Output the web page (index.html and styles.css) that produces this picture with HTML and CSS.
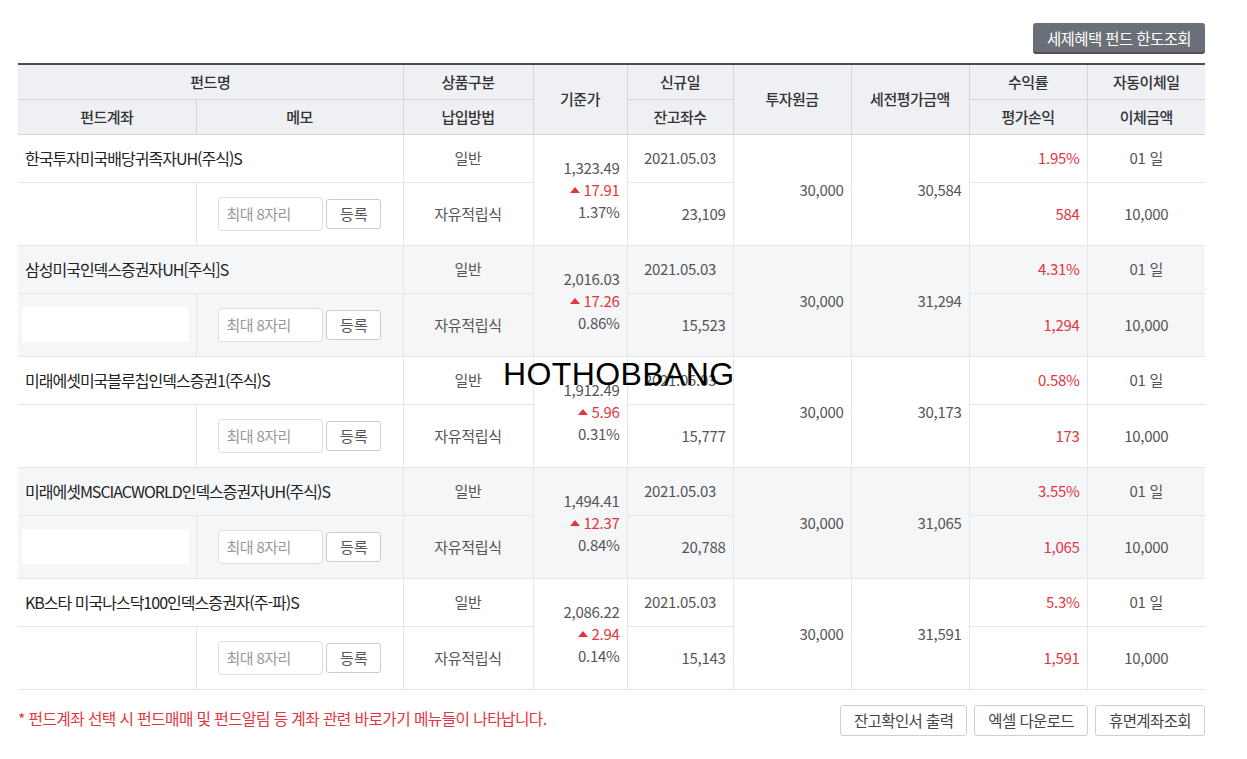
FILE: index.html
```html
<!DOCTYPE html>
<html lang="ko">
<head>
    <meta charset="UTF-8">
    <title>펀드 잔고</title>
    <link rel="stylesheet" href="styles.css">
</head>
<body>
    <div class="wrap">
        <div class="top-bar">
            <button class="btn-dark">세제혜택 펀드 한도조회</button>
        </div>

        <table class="fund-table">
            <colgroup>
                <col style="width:178px"><col style="width:207px"><col style="width:130px">
                <col style="width:94px"><col style="width:106px"><col style="width:118px">
                <col style="width:118px"><col style="width:118px"><col style="width:118px">
            </colgroup>
            <thead>
                <tr class="head-top">
                    <th colspan="2">펀드명</th>
                    <th>상품구분</th>
                    <th rowspan="2">기준가</th>
                    <th>신규일</th>
                    <th rowspan="2">투자원금</th>
                    <th rowspan="2">세전평가금액</th>
                    <th>수익률</th>
                    <th>자동이체일</th>
                </tr>
                <tr class="head-bottom">
                    <th>펀드계좌</th>
                    <th>메모</th>
                    <th>납입방법</th>
                    <th>잔고좌수</th>
                    <th>평가손익</th>
                    <th>이체금액</th>
                </tr>
            </thead>
            <tbody id="rows"></tbody>
        </table>

        <div class="footer">
            <p class="note">* 펀드계좌 선택 시 펀드매매 및 펀드알림 등 계좌 관련 바로가기 메뉴들이 나타납니다.</p>
            <div class="footer-btns">
                <button class="btn-line">잔고확인서 출력</button>
                <button class="btn-line">엑셀 다운로드</button>
                <button class="btn-line">휴면계좌조회</button>
            </div>
        </div>

        <div class="watermark">HOTHOBBANG</div>
    </div>

    <script>
        const funds = [
            { name: "한국투자미국배당귀족자UH(주식)S", price: "1,323.49", diff: "17.91", pct: "1.37%", date: "2021.05.03", units: "23,109", cost: "30,000", value: "30,584", rate: "1.95%", gain: "584", box: false },
            { name: "삼성미국인덱스증권자UH[주식]S", price: "2,016.03", diff: "17.26", pct: "0.86%", date: "2021.05.03", units: "15,523", cost: "30,000", value: "31,294", rate: "4.31%", gain: "1,294", box: true },
            { name: "미래에셋미국블루칩인덱스증권1(주식)S", price: "1,912.49", diff: "5.96", pct: "0.31%", date: "2021.05.03", units: "15,777", cost: "30,000", value: "30,173", rate: "0.58%", gain: "173", box: false },
            { name: "미래에셋MSCIACWORLD인덱스증권자UH(주식)S", price: "1,494.41", diff: "12.37", pct: "0.84%", date: "2021.05.03", units: "20,788", cost: "30,000", value: "31,065", rate: "3.55%", gain: "1,065", box: true },
            { name: "KB스타 미국나스닥100인덱스증권자(주-파)S", price: "2,086.22", diff: "2.94", pct: "0.14%", date: "2021.05.03", units: "15,143", cost: "30,000", value: "31,591", rate: "5.3%", gain: "1,591", box: false }
        ];

        const tbody = document.getElementById("rows");
        funds.forEach((f, i) => {
            const cls = i % 2 === 1 ? "alt" : "";
            tbody.innerHTML += `
                <tr class="row-top ${cls}">
                    <td colspan="2" class="name">${f.name}</td>
                    <td class="center">일반</td>
                    <td rowspan="2" class="right price">
                        <div>${f.price}</div>
                        <div class="up"><span class="tri"></span>${f.diff}</div>
                        <div>${f.pct}</div>
                    </td>
                    <td class="center">${f.date}</td>
                    <td rowspan="2" class="right">${f.cost}</td>
                    <td rowspan="2" class="right">${f.value}</td>
                    <td class="right red">${f.rate}</td>
                    <td class="center">01 일</td>
                </tr>
                <tr class="row-bottom ${cls}">
                    <td>${f.box ? '<div class="acct-box"></div>' : ''}</td>
                    <td class="memo">
                        <input type="text" placeholder="최대 8자리">
                        <button class="btn-small">등록</button>
                    </td>
                    <td class="center">자유적립식</td>
                    <td class="right">${f.units}</td>
                    <td class="right red">${f.gain}</td>
                    <td class="center">10,000</td>
                </tr>`;
        });
    </script>
</body>
</html>
```

FILE: styles.css
```css
body {
    margin: 0;
    background: #fff;
    font-family: "Noto Sans CJK KR", "Noto Sans", sans-serif;
    color: #555;
}

.wrap {
    position: relative;
    width: 1187px;
    padding: 23px 0 0 18px;
}

.top-bar {
    display: flex;
    justify-content: flex-end;
    margin-bottom: 11px;
}

.btn-dark {
    background: #6b6f78;
    color: #fff;
    border: none;
    border-radius: 3px;
    box-shadow: 0 2px 0 #4c4f56;
    height: 29px;
    padding: 0 14px;
    font-family: inherit;
    font-size: 15.5px;
    letter-spacing: -0.6px;
}

.fund-table {
    width: 1187px;
    border-collapse: collapse;
    table-layout: fixed;
    border-top: 2px solid #4a4d52;
    border-bottom: 1px solid #c8cacd;
    font-size: 15px;
}

.fund-table th {
    background: #eef0f3;
    color: #333;
    font-weight: 500;
    padding: 0;
    border: 1px solid #d2d5d9;
    border-top: none;
    line-height: 20px;
    letter-spacing: -0.5px;
}

.head-top { height: 35px; }
.head-bottom { height: 35px; }

.fund-table th:first-child { border-left: none; }
.fund-table th:last-child { border-right: none; }

.fund-table td {
    border: 1px solid #e4e6e9;
    padding: 0 7px;
    line-height: 22px;
    letter-spacing: -0.3px;
}

.fund-table tr td:first-child { border-left: none; }
.row-top td:last-child,
.row-bottom td:last-child { border-right: none; }

.row-top { height: 48px; }
.row-bottom { height: 63px; }

.row-top td { vertical-align: top; padding-top: 12px; }
.row-bottom td { vertical-align: middle; }
.row-bottom td.right { vertical-align: top; padding-top: 20px; }

.alt td { background: #f5f6f8; }

.name {
    color: #222;
    font-size: 16px;
    letter-spacing: -1px !important;
}

.center { text-align: center; }
.right { text-align: right; }
.red { color: #e4353d; }

.row-top td[rowspan] {
    vertical-align: middle;
    padding-top: 0;
}

.up { color: #e4353d; }

.tri {
    display: inline-block;
    width: 0;
    height: 0;
    border-left: 5px solid transparent;
    border-right: 5px solid transparent;
    border-bottom: 6px solid #e4353d;
    margin-right: 4px;
    vertical-align: 3px;
}

.acct-box {
    background: #fff;
    height: 35px;
    margin-left: -3px;
}

.memo {
    padding-left: 21px !important;
}

.memo input {
    width: 105px;
    height: 34px;
    box-sizing: border-box;
    border: 1px solid #dcdfe3;
    border-radius: 4px;
    padding: 0 8px;
    font-family: inherit;
    font-size: 15px;
    letter-spacing: -0.6px;
    color: #555;
    vertical-align: middle;
}

.memo input::placeholder { color: #999; }

.btn-small {
    width: 55px;
    height: 30px;
    background: #fff;
    border: 1px solid #c9ccd0;
    border-radius: 3px;
    color: #555;
    font-family: inherit;
    font-size: 15px;
    vertical-align: middle;
}

.footer {
    display: flex;
    justify-content: space-between;
    align-items: flex-start;
    padding-top: 15px;
}

.note {
    margin: 2px 0 0;
    color: #e4353d;
    font-size: 15.75px;
    letter-spacing: -0.6px;
}

.footer-btns {
    display: flex;
    gap: 7px;
}

.btn-line {
    background: #fff;
    border: 1px solid #ccd0d4;
    border-radius: 3px;
    height: 31px;
    padding: 0 13px;
    color: #444;
    font-family: inherit;
    font-size: 15.5px;
    letter-spacing: -0.6px;
}

.watermark {
    position: absolute;
    left: 503px;
    top: 356px;
    font-family: "Liberation Sans", Arial, sans-serif;
    font-size: 32px;
    color: #000;
    letter-spacing: 0.4px;
}
```
